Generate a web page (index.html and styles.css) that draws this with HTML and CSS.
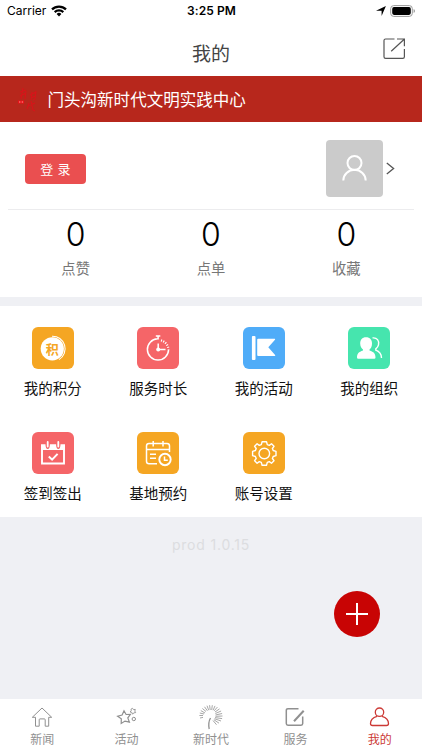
FILE: index.html
```html
<!DOCTYPE html>
<html lang="zh-CN">
<head>
<meta charset="utf-8">
<meta name="viewport" content="width=device-width">
<title>我的</title>
<link rel="stylesheet" href="styles.css">
</head>
<body>
<div class="app">
  <div class="status">
    <div class="carrier"><span>Carrier</span>
      <svg width="16" height="12" viewBox="0 0 16 12"><g fill="none" stroke="#000" stroke-width="2.2"><path d="M1 4.4a10 10 0 0 1 14 0"/><path d="M3.7 7.1a6.2 6.2 0 0 1 8.6 0"/></g><path d="M5.6 9a3.5 3.5 0 0 1 4.8 0L8 11.6z"/></svg>
    </div>
    <div class="clock">3:25 PM</div>
    <div class="power">
      <svg class="arrow" width="10" height="10" viewBox="0 0 10 10"><path d="M9.900 0 5.600 9.900V4.800H0z"/></svg>
      <svg width="26" height="12" viewBox="0 0 26 12"><rect x=".7" y=".6" width="21.6" height="10.8" rx="3" fill="none" stroke="#999"/><rect x="2.2" y="2.1" width="18.6" height="7.8" rx="1.8"/><path d="M23.6 4v4q1.4-.6 1.4-2t-1.4-2z" fill="#999"/></svg>
    </div>
  </div>
  <header class="header">
    <h1>我的</h1>
    <svg class="share" width="23" height="22" viewBox="0 0 23 22" fill="none" stroke="#555" stroke-width="1.2"><path d="M11.500 1H2.600Q1 1 1 2.600V18.700Q1 20.300 2.600 20.300H19.800Q21.400 20.300 21.400 18.700V11M14 1h7.400v7.300M21.200 1.200 8.200 13.300"/></svg>
  </header>
  <div class="banner">
    <svg width="24" height="26" viewBox="0 0 24 26" fill="none" stroke="#d8141a" stroke-width="1.100"><path d="M4 5l6-2M7 1 5 12M4 9l6-3M10 4l-1 8M14 8l6-3M16 5l-1 8M20 4l-1 8-2 1M15 11l4-2M13 16l-2 6M12 19l7-3M15 14l2 9 2 1"/><path d="M2 13.500h6v3H2z" fill="#ec1018" stroke="none"/><path d="M3 15h1.400M5.700 15h1.400" stroke="#fa9a90" stroke-width="1"/></svg>
    <span>门头沟新时代文明实践中心</span>
  </div>
  <section class="profile">
    <div class="account">
      <button class="login">登 录</button>
      <div class="avatar">
        <svg width="57" height="57" viewBox="0 0 57 57" fill="none" stroke="#fff" stroke-width="2"><circle cx="28.500" cy="23" r="7"/><path d="M17.300 40.500a11.200 10.700 0 0 1 22.400 0"/></svg>
      </div>
      <svg class="chevron" width="9" height="13" viewBox="0 0 9 13" fill="none" stroke="#555" stroke-width="1.300"><path d="M.8 1 7.600 6.500.8 12"/></svg>
    </div>
    <div class="stats">
      <div class="stat"><b>0</b><span>点赞</span></div>
      <div class="stat"><b>0</b><span>点单</span></div>
      <div class="stat"><b>0</b><span>收藏</span></div>
    </div>
  </section>
  <section class="menu">
    <div class="item">
      <div class="tile orange"><svg viewBox="0 0 42 42"><circle cx="20.300" cy="21.800" r="11.600" fill="#fff"/><path d="M20 9.200a12.600 12.600 0 0 1 7 23.400" fill="none" stroke="#fff" stroke-width="1.100"/><text class="seal" x="20.300" y="26.700" text-anchor="middle">积</text></svg></div>
      <span>我的积分</span>
    </div>
    <div class="item">
      <div class="tile red"><svg viewBox="0 0 42 42" fill="none" stroke="#fff" stroke-width="1.500"><path d="M20.500 11.800a10.600 10.600 0 1 0 11.100 10.800M18.800 9h4.500M21.100 9v3.500"/><path d="M24 13.400a10 10 0 0 1 7.500 9" stroke-width="2.200" stroke-dasharray="1.100 1.300"/><path d="M21.200 16.500v6M21 22.500h7.500"/><circle cx="21.200" cy="22.500" r="2" fill="#fff" stroke="none"/></svg></div>
      <span>服务时长</span>
    </div>
    <div class="item">
      <div class="tile blue"><svg viewBox="0 0 42 42" fill="#fff"><rect x="8.900" y="9" width="3.600" height="24" rx="1"/><path d="M14.200 12.700q0-.9.900-.9h16.500q1 0 .4.900l-6.700 7.500 6.800 7.800q.6.900-.4.900H15.100q-.9 0-.9-.9z"/></svg></div>
      <span>我的活动</span>
    </div>
    <div class="item">
      <div class="tile green"><svg viewBox="0 0 42 42"><path d="M18 10.200c4 0 6 2.600 6 6.200 0 3-1 4.800-2.500 6.200v1c4.300 1.400 6 3.200 6 7q0 1.200-1.200 1.200H10.200Q9 31.800 9 30.600c0-3.800 1.700-5.600 6-7v-1c-1.500-1.400-2.800-3.200-2.800-6.200 0-3.600 1.900-6.200 5.800-6.200z" fill="#fff"/><path d="M24.500 10.900c4.500-.6 7 3 6 7-.4 1.700-1.500 3-2.700 4v1.300c3.600 1.300 5.600 3.200 5.700 7.700" fill="none" stroke="#fff" stroke-width="1.400"/></svg></div>
      <span>我的组织</span>
    </div>
    <div class="item">
      <div class="tile red"><svg viewBox="0 0 42 42" fill="none" stroke="#fff"><path d="M10 13v18.500h22V13" stroke-width="1.900"/><path d="M9 12.300h4.500q0 4.700 2.200 4.700t2.200-4.700h6.200q0 4.700 2.200 4.700t2.200-4.700H33V18H9z" fill="#fff" stroke="none"/><path d="M15.700 10v4.500M26.300 10v4.500" stroke-width="1.800" stroke-linecap="round"/><path d="m16.800 24.500 3.300 3.200 5.500-5.800" stroke-width="2"/></svg></div>
      <span>签到签出</span>
    </div>
    <div class="item">
      <div class="tile orange"><svg viewBox="0 0 42 42" fill="none" stroke="#fff" stroke-width="1.500"><path d="M20 31.700H12q-2.500 0-2.500-2.500V14q0-2.500 2.500-2.500h18q2.500 0 2.500 2.500v6M9.500 17.600h23M16.200 9v5.500M26 9v5.500M13 22.300h6M13 26.300h6"/><circle cx="28" cy="27.500" r="5.700" stroke-width="1.900"/><path d="M27.500 24.500v3.700h3.300"/></svg></div>
      <span>基地预约</span>
    </div>
    <div class="item">
      <div class="tile orange"><svg viewBox="-21.300 -21.500 42 42" fill="none" stroke="#fff" stroke-width="1.400" stroke-linejoin="round"><circle r="5.300"/><path d="M-2.200-11.700H2.200L3-8.900 5-8.100 7.200-9.700 9.700-7.200 8.100-5 8.900-3 11.700-2.200V2.200L8.900 3 8.100 5 9.700 7.200 7.200 9.700 5 8.100 3 8.900 2.200 11.700H-2.200L-3 8.900-5 8.100-7.200 9.700-9.700 7.200-8.100 5-8.900 3-11.700 2.200V-2.200L-8.900-3-8.100-5-9.700-7.200-7.200-9.700-5-8.100-3-8.900z"/></svg></div>
      <span>账号设置</span>
    </div>
  </section>
  <main class="rest">
    <div class="version">prod 1.0.15</div>
    <button class="fab" aria-label="添加"><svg width="22" height="22" viewBox="0 0 22 22" stroke="#fff" stroke-width="2"><path d="M11 0v22M0 11h22"/></svg></button>
  </main>
  <nav class="tabs">
    <a><svg width="22" height="22" viewBox="0 0 22 22"><path d="M1.300 11.300 11 2l9.700 9.300h-3v8.900h-3.500v-6.500q0-.8-.8-.8H9q-.8 0-.8.800v6.500H4.500v-8.900z"/></svg><span>新闻</span></a>
    <a><svg width="22" height="22" viewBox="0 0 22 22"><path d="m8 4.800 2.100 3.700 4.300-.2-2.600 3.600 1.600 4.200-4.400-1-3.800 2.400.1-4.700-3.700-2.600 4.500-1.200z" stroke-width="1.200"/><path d="m16.500 2.300 1 1.300 1.800-.2-.5 1.700.9 1.500-1.700.2-1.400 1.300-.8-1.700-1.700-.4 1.100-1.200-.2-1.600z" stroke-width=".9"/><circle cx="17.800" cy="13" r="1.700"/></svg><span>活动</span></a>
    <a><svg width="26" height="26" viewBox="0 0 26 26"><path d="M2 14 5 13.400M1.400 11.500 5 11.500M1.800 9 6 10M2.800 6.600 7 9M4.400 4.500 8 7.500M6.500 2.800 9.400 6.800M9 1.700 10.700 6.200M11.600 1.200 12.200 6M14.300 1.200 13.700 6M17 1.900 15.100 6.200M19.400 3.100 16.200 6.800M21.500 4.900 17 8M23.100 7 17.400 9.500M24.100 9.500 17.500 11M24.500 12 17.500 12.300M24.100 14.600 17 13.600M23 17 16.500 14.700M21 19.200 15.900 15.700M18.500 20.700 15 16.500" stroke-width=".8"/><path d="M12.500 14q-2.600 4.500-1.300 11" stroke-width="1.300"/></svg><span>新时代</span></a>
    <a><svg width="22" height="22" viewBox="0 0 22 22" stroke-width="1.500"><path d="M14.500 2.700H4Q2.300 2.700 2.300 4.400v13.200Q2.300 19.300 4 19.300h13q1.700 0 1.700-1.700v-7"/><path d="M19.700 4.700 10 15.300" stroke-width="2"/></svg><span>服务</span></a>
    <a class="active"><svg width="22" height="22" viewBox="0 0 22 22" stroke-width="1.300"><circle cx="10.500" cy="6.200" r="4.200"/><path d="M8 10.300C4 11.500 1.500 14 1.500 17.500q0 2 2 2h14q2 0 2-2c0-3.500-2.500-6-6.500-7.200"/></svg><span>我的</span></a>
  </nav>
</div>
</body>
</html>
```
FILE: styles.css
```css
* { box-sizing: border-box; }
body { margin: 0; background: #fff; font-family: Inter, "Noto Sans CJK SC", sans-serif; color: #111; }
svg { display: block; flex: none; }
button { border: 0; padding: 0; font: inherit; }
.app { width: 422px; height: 750px; display: flex; flex-direction: column; overflow: hidden; }

.status { height: 22px; flex: none; display: grid; grid-template-columns: 1fr auto 1fr; align-items: center; font-size: 12px; line-height: 22px; color: #000; padding: 0 6px 0 7px; }
.carrier { display: flex; align-items: center; gap: 5px; }
.clock { font-weight: 600; letter-spacing: .1px; }
.power { display: flex; align-items: center; justify-content: flex-end; gap: 4px; }

.header { height: 53.500px; flex: none; display: grid; grid-template-columns: 1fr auto 1fr; align-items: center; padding: 12px 16px 0; }
.header h1 { grid-column: 2; margin: 0; font-size: 19px; line-height: 28px; font-weight: 400; color: #444; }
.share { justify-self: end; margin-top: -12px; }

.banner { height: 46px; flex: none; display: flex; align-items: center; gap: 7.500px; padding: 2px 16px 0; background: #b7271c; color: #fff; font-size: 16.550px; line-height: 24px; }

.profile { height: 175px; flex: none; padding: 0 8px; }
.account { height: 88px; display: flex; align-items: center; padding: 7px 19px 0 17px; border-bottom: 1px solid #ececee; }
.login { width: 61px; height: 30px; margin-right: auto; border-radius: 4px; background: #ea4f50; color: #fff; font-size: 13px; line-height: 30px; letter-spacing: .3px; }
.avatar { width: 57px; height: 57px; border-radius: 4px; background: #cbcbcb; }
.chevron { margin-left: 3px; }
.stats { display: grid; grid-template-columns: repeat(3, 1fr); padding-top: 4px; }
.stat { display: flex; flex-direction: column; align-items: center; }
.stat b { font-size: 32px; line-height: 42px; font-weight: 350; color: #000; }
.stat span { margin-top: 2px; font-size: 14.300px; line-height: 22px; color: #777; }

.menu { height: 220.500px; flex: none; border-top: 9.500px solid #eff0f4; display: grid; grid-template-columns: repeat(4, 1fr); grid-template-rows: 105.500px 105.500px; }
.item { display: flex; flex-direction: column; align-items: center; padding-top: 21px; font-size: 14.500px; line-height: 22px; color: #111; }
.item span { margin-top: 9px; }
.tile { width: 42px; height: 42px; border-radius: 6px; }
.orange { background: #f5a623; }
.red { background: #f56568; }
.blue { background: #4facf8; }
.green { background: #46e5ae; }
.seal { font-size: 13px; font-weight: 700; fill: #f5a623; }

.rest { flex: 1; background: #eff0f4; display: flex; flex-direction: column; align-items: center; padding-top: 18px; }
.version { font-size: 14px; line-height: 20px; color: #dcdde0; letter-spacing: .8px; }
.fab { width: 46px; height: 46px; margin: 36px 42px 0 0; align-self: flex-end; display: grid; place-items: center; border-radius: 50%; background: #c80404; }

.tabs { height: 51px; flex: none; display: grid; grid-template-columns: repeat(5, 1fr); background: #fff; }
.tabs a { display: flex; flex-direction: column; align-items: center; justify-content: flex-end; color: #909090; font-size: 12px; line-height: 18px; padding-bottom: 1px; }
.tabs svg { fill: none; stroke: currentColor; margin-bottom: 3px; }
.tabs a:nth-child(3) svg { margin-bottom: 1px; }
.tabs .active { color: #cc3935; }
```
